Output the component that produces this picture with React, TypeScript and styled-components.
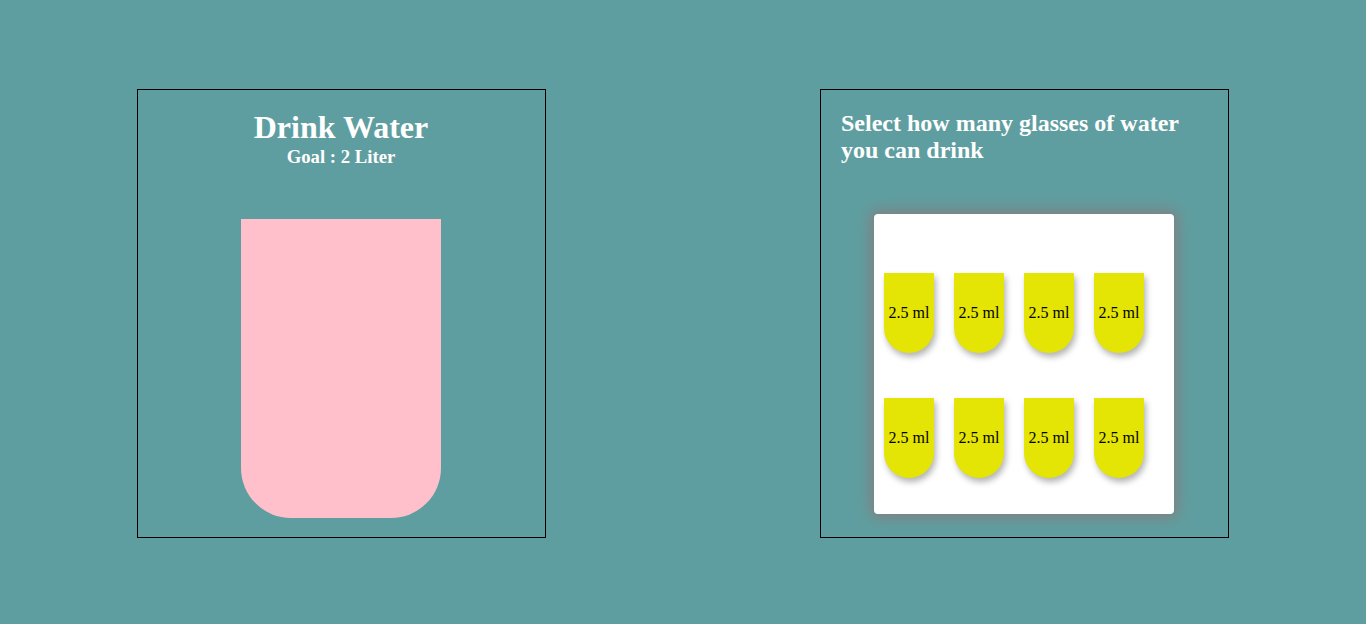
import React from 'react';
import styled, { createGlobalStyle } from 'styled-components';

const GlobalStyle = createGlobalStyle`
  html, body {
    margin: 0;
    padding: 0;
    background: cadetblue;
    font-family: "Liberation Serif", "Times New Roman", serif;
  }
`;

const Page = styled.div`
  display: flex;
  justify-content: space-around;
  align-items: flex-start;
  height: 624px;
  padding-top: 89px;
  box-sizing: border-box;
`;

const Panel = styled.section`
  box-sizing: border-box;
  width: 409px;
  height: 449px;
  border: 1px solid black;
  color: white;
  display: flex;
  flex-direction: column;
`;

const LeftPanel = styled(Panel)`
  align-items: center;
  padding: 19px 1px 19px 0;
`;

const RightPanel = styled(Panel)`
  padding: 20px 21px 20px 20px;
`;

const Title = styled.h1`
  margin: 0;
  font-size: 32px;
  font-weight: bold;
`;

const Goal = styled.h3`
  margin: 0;
  font-size: 18.72px;
  font-weight: bold;
`;

const Glass = styled.div`
  margin-top: auto;
  width: 200px;
  height: 299px;
  background: pink;
  border-radius: 0 0 50px 50px;
`;

const Prompt = styled.h2`
  margin: 0;
  font-size: 24px;
  font-weight: bold;
`;

const Card = styled.div`
  align-self: center;
  margin-top: 50px;
  width: 300px;
  height: 300px;
  background: white;
  border-radius: 4px;
  box-shadow: 0 0 14px 4px gray;
  box-sizing: border-box;
  padding: 59px 0 0 10px;
  display: grid;
  grid-template-columns: repeat(4, 50px);
  grid-auto-rows: 80px;
  column-gap: 20px;
  row-gap: 45px;
  align-content: start;
`;

const Cup = styled.button<{ $full?: boolean }>`
  all: unset;
  box-sizing: border-box;
  width: 50px;
  height: 80px;
  background: ${p => (p.$full ? '#6ab7f5' : '#e4e405')};
  border-radius: 0 0 25px 25px;
  box-shadow: 2px 4px 6px rgba(0, 0, 0, 0.3);
  display: flex;
  align-items: center;
  justify-content: center;
  font-family: "Liberation Serif", "Times New Roman", serif;
  font-size: 16px;
  color: black;
  cursor: pointer;
`;

export default function App() {
  const cups = Array.from({ length: 8 });
  return (
    <>
      <GlobalStyle />
      <Page>
        <LeftPanel>
          <Title>Drink Water</Title>
          <Goal>Goal : 2 Liter</Goal>
          <Glass />
        </LeftPanel>
        <RightPanel>
          <Prompt>Select how many glasses of water you can drink</Prompt>
          <Card>
            {cups.map((_, i) => (
              <Cup key={i}>2.5 ml</Cup>
            ))}
          </Card>
        </RightPanel>
      </Page>
    </>
  );
}
